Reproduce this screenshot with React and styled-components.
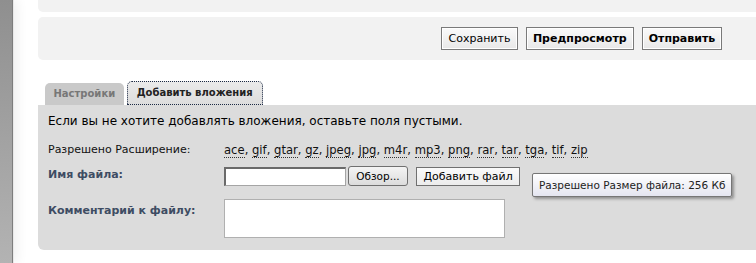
import React from "react";
import styled, { createGlobalStyle } from "styled-components";

const GlobalStyle = createGlobalStyle`
  html, body {
    margin: 0;
    padding: 0;
    background: #ffffff;
  }
  body {
    font-family: "DejaVu Sans", Verdana, sans-serif;
    color: #000;
  }
`;

const extensions = [
  "ace", "gif", "gtar", "gz", "jpeg", "jpg", "m4r",
  "mp3", "png", "rar", "tar", "tga", "tif", "zip",
];

const App = () => {
  return (
    <Page>
      <GlobalStyle />
      <SideBar />
      <Content>
        <TopPanel />
        <ButtonPanel>
          <Button>Сохранить</Button>
          <Button $bold>Предпросмотр</Button>
          <Button $bold>Отправить</Button>
        </ButtonPanel>
        <Tabs>
          <Tab>Настройки</Tab>
          <Tab $active>Добавить вложения</Tab>
        </Tabs>
        <MainPanel>
          <Intro>Если вы не хотите добавлять вложения, оставьте поля пустыми.</Intro>
          <Row $top={14}>
            <PlainLabel>Разрешено Расширение:</PlainLabel>
            <ExtList>
              {extensions.map((ext, i) => (
                <React.Fragment key={ext}>
                  <Ext>{ext}</Ext>
                  {i < extensions.length - 1 && ", "}
                </React.Fragment>
              ))}
            </ExtList>
          </Row>
          <Row $top={11}>
            <BoldLabel>Имя файла:</BoldLabel>
            <FileGroup>
              <FileInput />
              <BrowseButton>Обзор...</BrowseButton>
              <SmallButton>Добавить файл</SmallButton>
              <Tooltip>Разрешено Размер файла: 256 Кб</Tooltip>
            </FileGroup>
          </Row>
          <Row $top={18}>
            <BoldLabel>Комментарий к файлу:</BoldLabel>
            <CommentBox />
          </Row>
        </MainPanel>
      </Content>
    </Page>
  );
};

const Page = styled.div`
  display: flex;
  width: 756px;
  height: 263px;
  overflow: hidden;
`;

const SideBar = styled.div`
  width: 12px;
  flex-shrink: 0;
  background: linear-gradient(to bottom, #8f8f8f, #b3b3b3);
  border-right: 1px solid #7d7d7d;
  box-shadow: 1px 0 0 #e8e8e8, 4px 0 12px rgba(0, 0, 0, 0.07);
`;

const Content = styled.div`
  flex: 1;
  padding-left: 25px;
  display: flex;
  flex-direction: column;
`;

const TopPanel = styled.div`
  height: 12px;
  background: #f2f2f2;
  border-radius: 0 0 0 5px;
`;

const ButtonPanel = styled.div`
  margin-top: 5px;
  height: 43px;
  background: #f2f2f2;
  border-radius: 5px 0 0 5px;
  display: flex;
  align-items: center;
  gap: 8px;
  padding-left: 403px;
`;

const Button = styled.button`
  font-family: "DejaVu Sans", Verdana, sans-serif;
  font-size: 11px;
  font-weight: ${(p) => (p.$bold ? "bold" : "normal")};
  color: #000;
  height: 23px;
  padding: 0 ${(p) => (p.$bold ? "6px" : "6.5px")};
  background: linear-gradient(to bottom, #fafafa, #e8e8e8);
  border: 1px solid #7a7a7a;
  box-shadow: inset 0 0 0 1px #ffffff;
  cursor: pointer;
`;

const Tabs = styled.div`
  margin-top: 21px;
  padding-left: 7px;
  display: flex;
  align-items: flex-end;
  gap: 3px;
  height: 24px;
`;

const Tab = styled.div`
  font-size: 10px;
  font-weight: bold;
  height: ${(p) => (p.$active ? "24px" : "22px")};
  line-height: ${(p) => (p.$active ? "24px" : "22px")};
  padding: 0 ${(p) => (p.$active ? "10px" : "8.5px")};
  color: ${(p) => (p.$active ? "#222" : "#777")};
  background: ${(p) =>
    p.$active ? "linear-gradient(to bottom, #ebebeb, #dcdcdc)" : "#c9c9c9"};
  border-radius: 5px 5px 0 0;
  outline: ${(p) => (p.$active ? "1px dotted #1c2a44" : "none")};
  outline-offset: -1px;
  box-sizing: border-box;
`;

const MainPanel = styled.div`
  height: 145px;
  background: #dcdcdc;
  border-radius: 0 0 0 6px;
  padding: 8px 10px 0 10px;
  box-sizing: border-box;
`;

const Intro = styled.div`
  font-size: 12px;
  line-height: 16px;
`;

const Row = styled.div`
  display: flex;
  align-items: flex-start;
  margin-top: ${(p) => p.$top}px;
`;

const PlainLabel = styled.div`
  width: 176px;
  font-size: 11px;
  line-height: 14px;
  color: #111;
`;

const BoldLabel = styled.div`
  width: 176px;
  font-size: 11px;
  line-height: 14px;
  font-weight: bold;
  color: #3e4c63;
`;

const ExtList = styled.div`
  font-size: 11.6px;
  line-height: 14px;
  color: #111;
  white-space: nowrap;
`;

const Ext = styled.span`
  border-bottom: 1px dotted #333;
`;

const FileGroup = styled.div`
  display: flex;
  align-items: center;
  position: relative;
  margin-top: -2px;
`;

const FileInput = styled.div`
  width: 119px;
  height: 16px;
  background: #fff;
  border: 1px solid #a5a5a5;
  border-top: 2px solid #6a6a6a;
  border-left: 2px solid #6a6a6a;
`;

const BrowseButton = styled.div`
  margin-left: 2px;
  width: 58px;
  height: 18px;
  font-size: 10.5px;
  line-height: 18px;
  text-align: center;
  border: 1px solid #707070;
  border-radius: 3px;
  background: linear-gradient(to bottom, #f4f4f4, #dcdcdc);
`;

const SmallButton = styled.div`
  margin-left: 8px;
  height: 17px;
  padding: 0 6.5px;
  font-size: 11px;
  line-height: 17px;
  border: 1px solid #707070;
  background: linear-gradient(to bottom, #fafafa, #ececec);
`;

const Tooltip = styled.div`
  position: absolute;
  left: 308px;
  top: 7px;
  white-space: nowrap;
  height: 22px;
  line-height: 22px;
  padding: 0 6px;
  font-size: 10.5px;
  color: #222;
  background: linear-gradient(to bottom, #ffffff, #e4e5f0);
  border: 1px solid #767676;
  border-radius: 2px;
  box-shadow: 2px 2px 3px rgba(0, 0, 0, 0.35);
`;

const CommentBox = styled.div`
  margin-top: -5px;
  width: 279px;
  height: 37px;
  background: #fff;
  border: 1px solid #b0b0b0;
`;

export default App;
